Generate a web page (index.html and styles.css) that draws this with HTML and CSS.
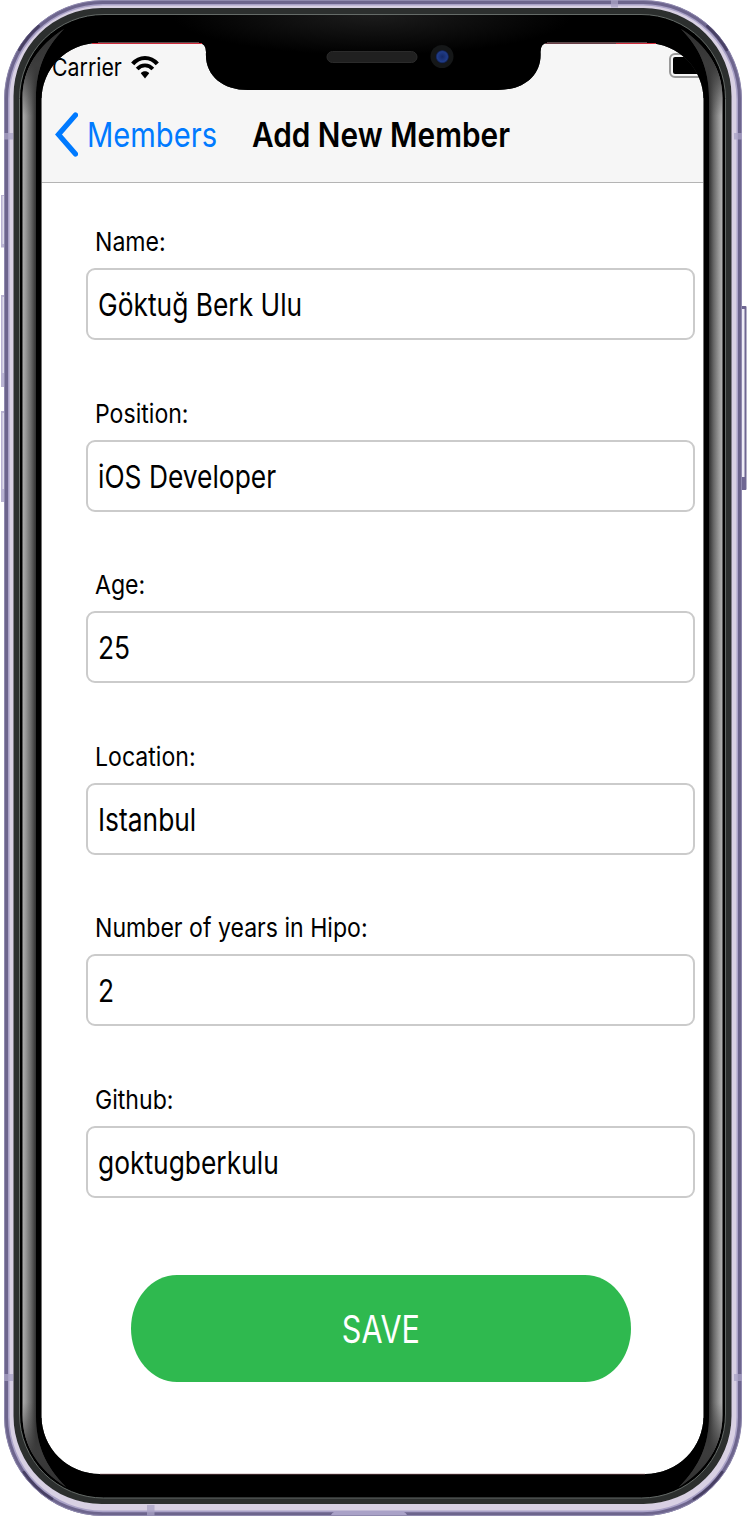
FILE: index.html
```
<!DOCTYPE html>
<html lang="en">
<head>
<meta charset="utf-8">
<title>Add New Member</title>
<link rel="stylesheet" href="styles.css">
</head>
<body>
<div class="phone">
  <main class="screen">
    <header class="top">
      <div class="status">
        <span class="carrier">Carrier</span>
        <svg class="wifi" viewBox="0 0 28 24">
          <g fill="none" stroke="#000" stroke-width="4.2">
            <path d="M1.700 8.900C8.500 1 19.500 1 26.300 8.900"/>
            <path d="M6.200 14C10.500 9.200 17.500 9.200 21.800 14" stroke-width="3.800"/>
          </g>
          <path d="M14 23.400L9.800 18.300C12 15.700 16 15.700 18.200 18.300Z"/>
        </svg>
        <span class="battery"><span class="charge"></span></span>
      </div>
      <nav class="nav">
        <svg class="back" viewBox="0 0 24 46"><path d="M21.500 3L4.500 22.500L21.500 42" fill="none" stroke="#007aff" stroke-width="5.200" stroke-linecap="round" stroke-linejoin="miter"/></svg>
        <a class="members">Members</a>
        <h1 class="title">Add New Member</h1>
      </nav>
    </header>
    <form class="form">
      <div class="group"><label class="label">Name:</label><div class="field"><span class="value">Göktuğ Berk Ulu</span></div></div>
      <div class="group"><label class="label">Position:</label><div class="field"><span class="value">iOS Developer</span></div></div>
      <div class="group"><label class="label">Age:</label><div class="field"><span class="value">25</span></div></div>
      <div class="group"><label class="label">Location:</label><div class="field"><span class="value">Istanbul</span></div></div>
      <div class="group"><label class="label">Number of years in Hipo:</label><div class="field"><span class="value">2</span></div></div>
      <div class="group"><label class="label">Github:</label><div class="field"><span class="value">goktugberkulu</span></div></div>
      <button type="button" class="save"><span class="save-text">SAVE</span></button>
    </form>
  </main>
  <svg class="frame" viewBox="0 0 748 1518">
    <defs>
      <linearGradient id="gl" x1="22" x2="36" y1="0" y2="0" gradientUnits="userSpaceOnUse">
        <stop offset="0" stop-color="#b4b4b4"/><stop offset=".3" stop-color="#949494"/><stop offset=".65" stop-color="#686868"/><stop offset="1" stop-color="#303030"/>
      </linearGradient>
      <linearGradient id="gr" x1="722.500" x2="709" y1="0" y2="0" gradientUnits="userSpaceOnUse">
        <stop offset="0" stop-color="#b4b4b4"/><stop offset=".3" stop-color="#949494"/><stop offset=".65" stop-color="#686868"/><stop offset="1" stop-color="#303030"/>
      </linearGradient>
      <linearGradient id="fade" x1="0" x2="0" y1="28" y2="1490" gradientUnits="userSpaceOnUse">
        <stop offset="0" stop-color="#303030"/><stop offset=".025" stop-color="#3c3c3c"/><stop offset=".06" stop-color="#3c3c3c" stop-opacity="0"/>
        <stop offset=".94" stop-color="#3c3c3c" stop-opacity="0"/><stop offset=".975" stop-color="#3c3c3c"/><stop offset="1" stop-color="#303030"/>
      </linearGradient>
      <radialGradient id="sheen" cx="373" cy="15" r="200" gradientUnits="userSpaceOnUse" gradientTransform="matrix(1 0 0 .2 0 12)">
        <stop offset="0" stop-color="#1c1c1c"/><stop offset="1" stop-color="#000"/>
      </radialGradient>
      <radialGradient id="lens"><stop offset="0" stop-color="#142866"/><stop offset=".75" stop-color="#203c88"/><stop offset="1" stop-color="#0c1430"/></radialGradient>
      <clipPath id="bezel-clip"><path clip-rule="evenodd" d="M0 0H748V1518H0Z
        M98 43A57 57 0 0 0 41.500 100V1416A58 58 0 0 0 99.500 1474H645.500A58 58 0 0 0 703.500 1416V100A57 57 0 0 0 647 43H547Q540.500 43.500 540.500 52C542 75 524 90 498 90H248C222 90 204.500 75 206 52Q206 43.500 199 43Z"/></clipPath>
    </defs>
    <!-- side buttons -->
    <g fill="#b9b3d2">
      <rect x="1" y="195" width="4" height="52.500"/><rect x="1" y="295" width="4" height="92"/><rect x="1" y="411" width="4" height="91"/>
    </g>
    <g fill="#dedbea">
      <rect x="2.500" y="196" width="1.500" height="48"/><rect x="2.500" y="297" width="1.500" height="76"/><rect x="2.500" y="413" width="1.500" height="76"/>
    </g>
    <rect x="741" y="306" width="5.500" height="184" rx="1" fill="#6f6792"/>
    <rect x="742" y="309" width="2.500" height="168" fill="#eeecf5"/>
    <!-- metal band -->
    <g fill="none">
      <rect x="10" y="5" width="726" height="1504" rx="93" stroke="#d8d0e3" stroke-width="10"/>
      <rect x="7" y="3" width="732" height="1510" rx="96" stroke="#aaa2c8" stroke-width="5"/>
      <rect x="6.200" y="2.200" width="733.600" height="1511.800" rx="96.800" stroke="#6d658d" stroke-width="3.600"/>
      <rect x="4.500" y=".5" width="737" height="1515" rx="98.500" stroke="#8f89ae" stroke-width="1"/>
      <path d="M19.400 49.800A96.500 96.500 0 0 1 38.400 26.300M726.600 49.800A96.500 96.500 0 0 0 707.600 26.300M24 1472.300A96.500 96.500 0 0 0 51.900 1498.800M722 1472.300A96.500 96.500 0 0 1 694 1498.800" stroke="#292343" stroke-width="3" stroke-linecap="round" opacity=".55"/>
    </g>
    <g fill="#aaa3c6" opacity=".75">
      <rect x="4" y="133" width="9" height="6.500"/><rect x="734" y="133" width="8" height="6.500"/><rect x="4" y="1374" width="9" height="7"/><rect x="734" y="1374" width="8" height="7"/>
      <rect x="611" y="0" width="7" height="7.500"/><rect x="147" y="1505" width="7.500" height="10.500"/>
    </g>
    <path d="M331 1515Q333 1511 339 1511H399Q405 1511 407 1515Z" fill="#aaa2c8"/>
    <!-- bezel with screen cut-out -->
    <path fill="#2c2f2e" clip-path="url(#bezel-clip)" d="M101.500 8H643.500A88 88 0 0 1 731.500 96V1416A88 88 0 0 1 643.500 1504H101.500A88 88 0 0 1 13.500 1416V96A88 88 0 0 1 101.500 8Z"/>
    <path fill="url(#sheen)" stroke="#656b68" stroke-width="1" d="M104 14.500H641A84 84 0 0 1 725.500 98.500V1414A84 84 0 0 1 641.500 1498H103.500A84 84 0 0 1 19.500 1414V98.500A84 84 0 0 1 104 14.500Z" clip-path="url(#bezel-clip)"/>
    <!-- side reflections -->
    <path d="M64 29C39 45 22.500 68 22.500 98V1415C22.500 1446 39 1470 66 1487C45 1466 36 1444 36 1416V98C36 68 46 47 64 29Z" fill="url(#gl)"/>
    <path d="M64 29C39 45 22.500 68 22.500 98V1415C22.500 1446 39 1470 66 1487C45 1466 36 1444 36 1416V98C36 68 46 47 64 29Z" fill="url(#fade)"/>
    <path d="M681 29C706 45 722.500 68 722.500 98V1415C722.500 1446 706 1470 679 1487C700 1466 709 1444 709 1416V98C709 68 699 47 681 29Z" fill="url(#gr)"/>
    <path d="M681 29C706 45 722.500 68 722.500 98V1415C722.500 1446 706 1470 679 1487C700 1466 709 1444 709 1416V98C709 68 699 47 681 29Z" fill="url(#fade)"/>
    <g fill="none" stroke-width="1">
      <path d="M41.500 98V1418M703.500 98V1418" stroke="#8d8d8d" stroke-width=".6"/>
      <path d="M98 42.500H199M547 42.500H647" stroke="#5d4a4b"/>
      <path d="M92 43.500H202M616 43.500H656" stroke="#d02c3c"/>
      <path d="M545 43.500H616" stroke="#6b4048"/>
      <path d="M100 1474.200H645" stroke="#744c52" stroke-width=".7"/>
    </g>
    <!-- speaker and camera -->
    <rect x="327" y="51.500" width="90" height="11" rx="5.500" fill="#202020" stroke="#2b2b2b"/>
    <circle cx="442" cy="56.500" r="11.500" fill="#151718"/>
    <circle cx="442.300" cy="56.700" r="6.800" fill="url(#lens)"/>
  </svg>
</div>
</body>
</html>
```

FILE: styles.css
```
body {
  margin: 0;
  background: #fff;
  font-family: Inter, "Liberation Sans", sans-serif;
  color: #000;
}

.phone {
  position: relative;
  width: 748px;
  height: 1518px;
  overflow: hidden;
}

/* device shell lies over the screen content */
.frame {
  position: absolute;
  inset: 0;
  width: 748px;
  height: 1518px;
  pointer-events: none;
}

.screen {
  box-sizing: border-box;
  width: 663px;
  height: 1475px;
  margin-left: 41px;
  padding-top: 43px;
  overflow: hidden;
}

.top {
  box-sizing: border-box;
  height: 140px;
  background: #f6f6f6;
  border-bottom: 1px solid #b4b4b4;
}

.status {
  display: flex;
  height: 47px;
  align-items: center;
  padding-left: 11px;
}

.carrier {
  flex: none;
  width: 79px;
  font-size: 24.5px;
  line-height: 30px;
  white-space: nowrap;
  transform: scaleX(.87);
  transform-origin: left;
}

.wifi {
  flex: none;
  width: 28px;
  height: 24px;
}

.battery {
  box-sizing: border-box;
  flex: none;
  width: 58px;
  height: 25px;
  margin: -3px 0 0 510px;
  padding: 2px;
  border: 2px solid #999;
  border-radius: 6px;
}

.charge {
  display: block;
  height: 17px;
  background: #000;
  border-radius: 2px;
}

.nav {
  display: flex;
  height: 90px;
  align-items: center;
  padding-left: 13px;
}

.back {
  flex: none;
  width: 24px;
  height: 46px;
}

.members,
.title {
  flex: none;
  font-size: 34.5px;
  line-height: 44px;
  white-space: nowrap;
  transform-origin: left;
}

.members {
  width: 165px;
  margin-left: 9px;
  color: #007aff;
  transform: scaleX(.845);
}

.title {
  margin: 0;
  font-weight: 600;
  transform: scaleX(.863);
}

.form {
  display: flex;
  flex-direction: column;
  padding: 44px 9px 0 45px;
}

.group {
  margin-bottom: 58.5px;
}

.label {
  display: block;
  width: max-content;
  height: 30px;
  margin: 0 0 11px 9px;
  font-size: 26px;
  line-height: 30px;
  transform: scaleX(.888);
  transform-origin: left;
}

.field {
  box-sizing: border-box;
  display: flex;
  align-items: center;
  height: 72px;
  padding: 2px 0 0 10px;
  border: 2px solid #cbcbcb;
  border-radius: 9px;
}

.value {
  font-size: 31.5px;
  line-height: 40px;
  white-space: nowrap;
  transform: scaleX(.837);
  transform-origin: left;
}

.save {
  width: 500px;
  height: 107px;
  margin: 19px 0 0 45px;
  padding: 2px 0 0;
  border: 0;
  border-radius: 46px / 53.5px;
  background: #2fb94f;
  color: #fff;
  font-family: inherit;
  font-size: 37.5px;
}

.save-text {
  display: inline-block;
  transform: scaleX(.815);
}
```
